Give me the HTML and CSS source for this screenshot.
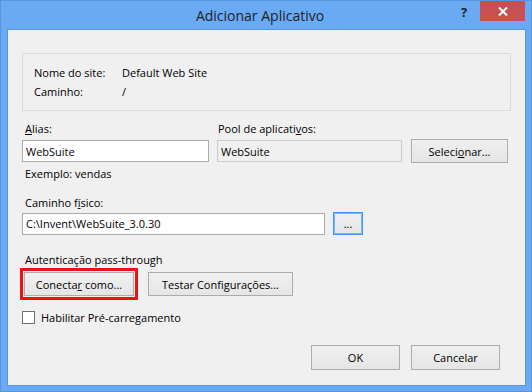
FILE: index.html
```html
<!DOCTYPE html>
<html lang="pt">
<head>
    <meta charset="UTF-8">
    <title>Adicionar Aplicativo</title>
    <link rel="stylesheet" href="styles.css">
</head>
<body>

<div class="window">
    <div class="titlebar">
        <span class="title">Adicionar Aplicativo</span>
        <span class="help">?</span>
        <span class="close">
            <svg width="10" height="9" viewBox="0 0 10 9">
                <path d="M1 0.5 L9 8.5 M9 0.5 L1 8.5" stroke="#fff" stroke-width="2"/>
            </svg>
        </span>
    </div>

    <div class="client">
        <div class="group">
            <div class="info-row"><span class="info-label">Nome do site:</span><span>Default Web Site</span></div>
            <div class="info-row"><span class="info-label">Caminho:</span><span>/</span></div>
        </div>

        <div class="fields">
            <div class="col-alias">
                <label class="label"><u>A</u>lias:</label>
                <input class="text" type="text" value="WebSuite">
            </div>
            <div class="col-pool">
                <label class="label">Pool de aplicati<u>v</u>os:</label>
                <input class="text disabled" type="text" value="WebSuite" disabled>
            </div>
            <button class="btn btn-select">Seleci<u>o</u>nar...</button>
        </div>
        <div class="hint">Exemplo: vendas</div>

        <label class="label label-path">Caminho f<u>í</u>sico:</label>
        <div class="path-row">
            <input class="text path" type="text" value="C:\Invent\WebSuite_3.0.30">
            <button class="btn btn-browse">...</button>
        </div>

        <div class="section">Autenticação pass-through</div>
        <div class="auth-row">
            <button class="btn btn-connect">Conecta<u>r</u> como...</button>
            <button class="btn btn-test">Testar Configurações...</button>
        </div>

        <div class="check-row">
            <span class="checkbox"></span>
            <span>Habilitar Pré-carregamento</span>
        </div>

        <div class="footer">
            <button class="btn btn-footer">OK</button>
            <button class="btn btn-footer">Cancelar</button>
        </div>
    </div>
</div>

</body>
</html>
```

FILE: styles.css
```css
body {
    margin: 0;
    font-family: "Open Sans", sans-serif;
    font-size: 11px;
    color: #000;
}
.window {
    width: 532px;
    height: 392px;
    box-sizing: border-box;
    background: #6aaaf4;
    border: 1px solid #5a93de;
    padding: 28px 5px 5px 6px;
    position: relative;
}
.titlebar {
    position: absolute;
    top: 0;
    left: 0;
    right: 0;
    height: 28px;
}
.title {
    position: absolute;
    left: 0;
    right: 12px;
    top: 5px;
    text-align: center;
    font-size: 14px;
    color: #1e1e1e;
}
.help {
    position: absolute;
    left: 460px;
    top: 2px;
    font-size: 13px;
    font-weight: bold;
    color: #222;
}
.close {
    position: absolute;
    left: 479px;
    top: 0;
    width: 45px;
    height: 20px;
    background: #c75050;
    display: flex;
    align-items: center;
    justify-content: center;
}
.client {
    height: 100%;
    box-sizing: border-box;
    background: #f0f0f0;
    border: 1px solid #5b93dc;
    padding: 23px 15px 0 14px;
}
.group {
    width: 489px;
    height: 58px;
    box-sizing: border-box;
    border: 1px solid #dcdcdc;
    padding: 9px 11px;
}
.info-row {
    display: flex;
    height: 19px;
    align-items: center;
}
.info-label {
    width: 88px;
}
.fields {
    display: flex;
    align-items: flex-end;
    margin-top: 10px;
}
.col-alias {
    width: 187px;
}
.col-pool {
    width: 185px;
    margin-left: 8px;
}
.label {
    display: block;
    height: 15px;
    line-height: 15px;
    margin: 0 0 4px 3px;
}
.col-pool .label {
    margin-left: 1px;
}
.text {
    display: block;
    width: 100%;
    height: 22px;
    box-sizing: border-box;
    border: 1px solid #ababab;
    background: #fff;
    padding: 0 3px;
    font: inherit;
    color: #000;
}
.text.disabled {
    background: #f0f0f0;
    border-color: #cccccc;
}
.btn {
    height: 24px;
    box-sizing: border-box;
    border: 1px solid #acacac;
    background: linear-gradient(#f0f0f0, #e5e5e5);
    font: inherit;
    color: #000;
    padding: 0;
}
.btn-select {
    width: 97px;
    margin: 0 0 -1px 9px;
}
.hint {
    margin: 4px 0 0 3px;
    height: 15px;
    line-height: 15px;
}
.label-path {
    margin-top: 14px;
    margin-bottom: 2px;
}
.path-row {
    display: flex;
    align-items: center;
}
.text.path {
    width: 303px;
}
.btn-browse {
    width: 30px;
    height: 23px;
    margin-left: 8px;
    border: 1px solid #3399ff;
    box-shadow: inset 0 0 0 1px #7ab8f5;
}
.section {
    margin: 17px 0 0 3px;
    height: 15px;
    line-height: 15px;
}
.auth-row {
    display: flex;
    margin-top: 5px;
}
.btn-connect {
    width: 110px;
    margin-left: 2px;
    outline: 3px solid #ee1111;
    outline-offset: 1px;
}
.btn-test {
    width: 145px;
    margin-left: 14px;
}
.check-row {
    display: flex;
    align-items: center;
    margin-top: 14px;
    height: 15px;
}
.checkbox {
    width: 13px;
    height: 13px;
    box-sizing: border-box;
    border: 1px solid #707070;
    background: #fff;
    margin-right: 6px;
}
.footer {
    display: flex;
    justify-content: flex-end;
    gap: 11px;
    margin-top: 20px;
    padding-right: 10px;
}
.btn-footer {
    width: 89px;
    height: 25px;
}
```
